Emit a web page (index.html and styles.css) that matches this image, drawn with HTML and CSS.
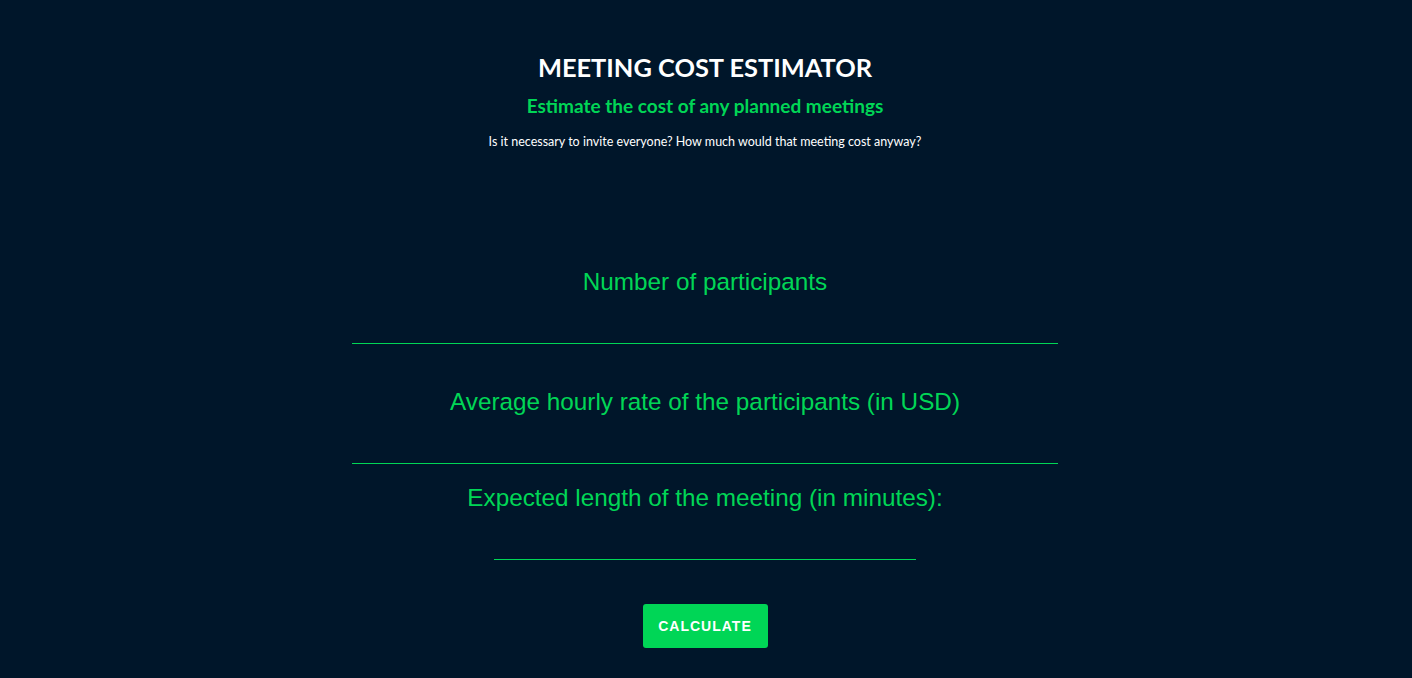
FILE: index.html
```html
<!DOCTYPE html>
<html lang="en">
<head>
<meta charset="utf-8">
<title>Meeting Cost Estimator</title>
<link rel="stylesheet" href="styles.css">
</head>
<body>
<main class="page">
  <header class="intro">
    <h1 class="title">MEETING COST ESTIMATOR</h1>
    <h2 class="subtitle">Estimate the cost of any planned meetings</h2>
    <p class="lead">Is it necessary to invite everyone? How much would that meeting cost anyway?</p>
  </header>
  <form class="form">
    <div class="field field-second-gap">
      <label class="label" for="participants">Number of participants</label>
      <div class="input-wrap"><input class="input" id="participants" type="text"></div>
    </div>
    <div class="field field-second">
      <label class="label" for="rate">Average hourly rate of the participants (in USD)</label>
      <div class="input-wrap"><input class="input" id="rate" type="text"></div>
    </div>
    <div class="field field-third">
      <label class="label" for="length">Expected length of the meeting (in minutes):</label>
      <div class="input-wrap input-short"><input class="input" id="length" type="text"></div>
    </div>
    <button class="button" type="button">CALCULATE</button>
  </form>
</main>
</body>
</html>
```
FILE: styles.css
```css
* { box-sizing: border-box; }
html, body { margin: 0; padding: 0; }
body {
  background: #00162a;
  color: #ffffff;
  font-family: "Lato", "Liberation Sans", sans-serif;
  height: 678px;
  overflow: hidden;
}
.page {
  display: flex;
  flex-direction: column;
  align-items: center;
  padding-right: 2px;
}
.intro {
  display: flex;
  flex-direction: column;
  align-items: center;
  padding-top: 52px;
}
.title {
  margin: 0;
  font-size: 25.4px;
  line-height: 30px;
  font-weight: 700;
  color: #ffffff;
}
.subtitle {
  margin: 13px 0 0;
  font-size: 19px;
  line-height: 22px;
  font-weight: 700;
  color: #00d656;
}
.lead {
  margin: 17px 0 0;
  font-size: 12.5px;
  line-height: 16px;
  color: #ffffff;
}
.form {
  width: 706px;
  display: flex;
  flex-direction: column;
  align-items: center;
  margin-top: 118px;
}
.field {
  width: 100%;
  display: flex;
  flex-direction: column;
  align-items: center;
}
.field-second { margin-top: 44px; }
.field-third { margin-top: 20px; }
.label {
  font-family: "Liberation Sans", Arial, sans-serif;
  font-size: 24.3px;
  line-height: 28px;
  color: #00d656;
}
.input-wrap {
  width: 100%;
  height: 48px;
  border-bottom: 1px solid #00d656;
  display: flex;
}
.input-short { width: 422px; }
.input {
  -webkit-appearance: none;
  appearance: none;
  flex: 1;
  min-width: 0;
  background: transparent;
  border: 0;
  color: #ffffff;
  font-size: 20px;
  outline: none;
  padding: 0;
}
.button {
  margin-top: 44px;
  width: 125px;
  height: 44px;
  background: #00d656;
  color: #ffffff;
  border: none;
  border-radius: 3px;
  font-family: "Liberation Sans", Arial, sans-serif;
  font-weight: 700;
  font-size: 14px;
  letter-spacing: 1px;
  padding: 0;
}
```
